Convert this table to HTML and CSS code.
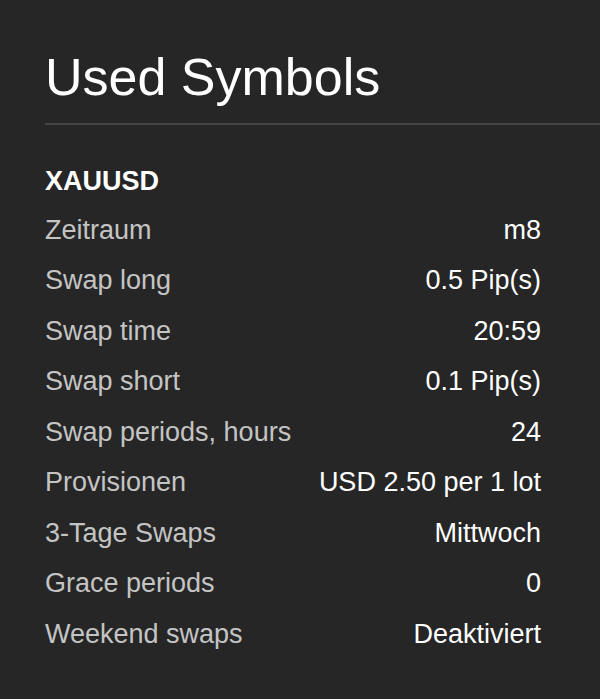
FILE: index.html
```html
<!DOCTYPE html>
<html lang="de">
<head>
  <meta charset="UTF-8">
  <title>Used Symbols</title>
  <meta name="viewport" content="width=device-width, initial-scale=1.0">
  <link rel="stylesheet" href="styles.css">
</head>
<body>

  <div class="panel">
    <h1>Used Symbols</h1>

    <div class="symbol">
      <h2>XAUUSD</h2>
      <div class="zeile"><span class="name">Zeitraum</span><span class="wert">m8</span></div>
      <div class="zeile"><span class="name">Swap long</span><span class="wert">0.5 Pip(s)</span></div>
      <div class="zeile"><span class="name">Swap time</span><span class="wert">20:59</span></div>
      <div class="zeile"><span class="name">Swap short</span><span class="wert">0.1 Pip(s)</span></div>
      <div class="zeile"><span class="name">Swap periods, hours</span><span class="wert">24</span></div>
      <div class="zeile"><span class="name">Provisionen</span><span class="wert">USD 2.50 per 1 lot</span></div>
      <div class="zeile"><span class="name">3-Tage Swaps</span><span class="wert">Mittwoch</span></div>
      <div class="zeile"><span class="name">Grace periods</span><span class="wert">0</span></div>
      <div class="zeile"><span class="name">Weekend swaps</span><span class="wert">Deaktiviert</span></div>
    </div>
  </div>

</body>
</html>
```

FILE: styles.css
```css
body {
  margin: 0;
  background-color: #262626;
  font-family: 'Liberation Sans', Arial, sans-serif;
  color: #fff;
}
.panel {
  padding-left: 45px;
}
h1 {
  margin: 49px 0 0 0;
  padding-bottom: 16px;
  font-size: 52px;
  font-weight: normal;
  line-height: 57.5px;
  border-bottom: 2px solid #444;
}
.symbol {
  margin-top: 41px;
  margin-right: 59px;
}
h2 {
  margin: 0 0 9px 0;
  font-size: 27px;
  line-height: 30px;
  font-weight: bold;
}
.zeile {
  display: flex;
  justify-content: space-between;
  padding: 10px 0;
  font-size: 27px;
  line-height: 30.5px;
}
.name {
  color: #c4c4c4;
}
.wert {
  color: #fff;
}
```
